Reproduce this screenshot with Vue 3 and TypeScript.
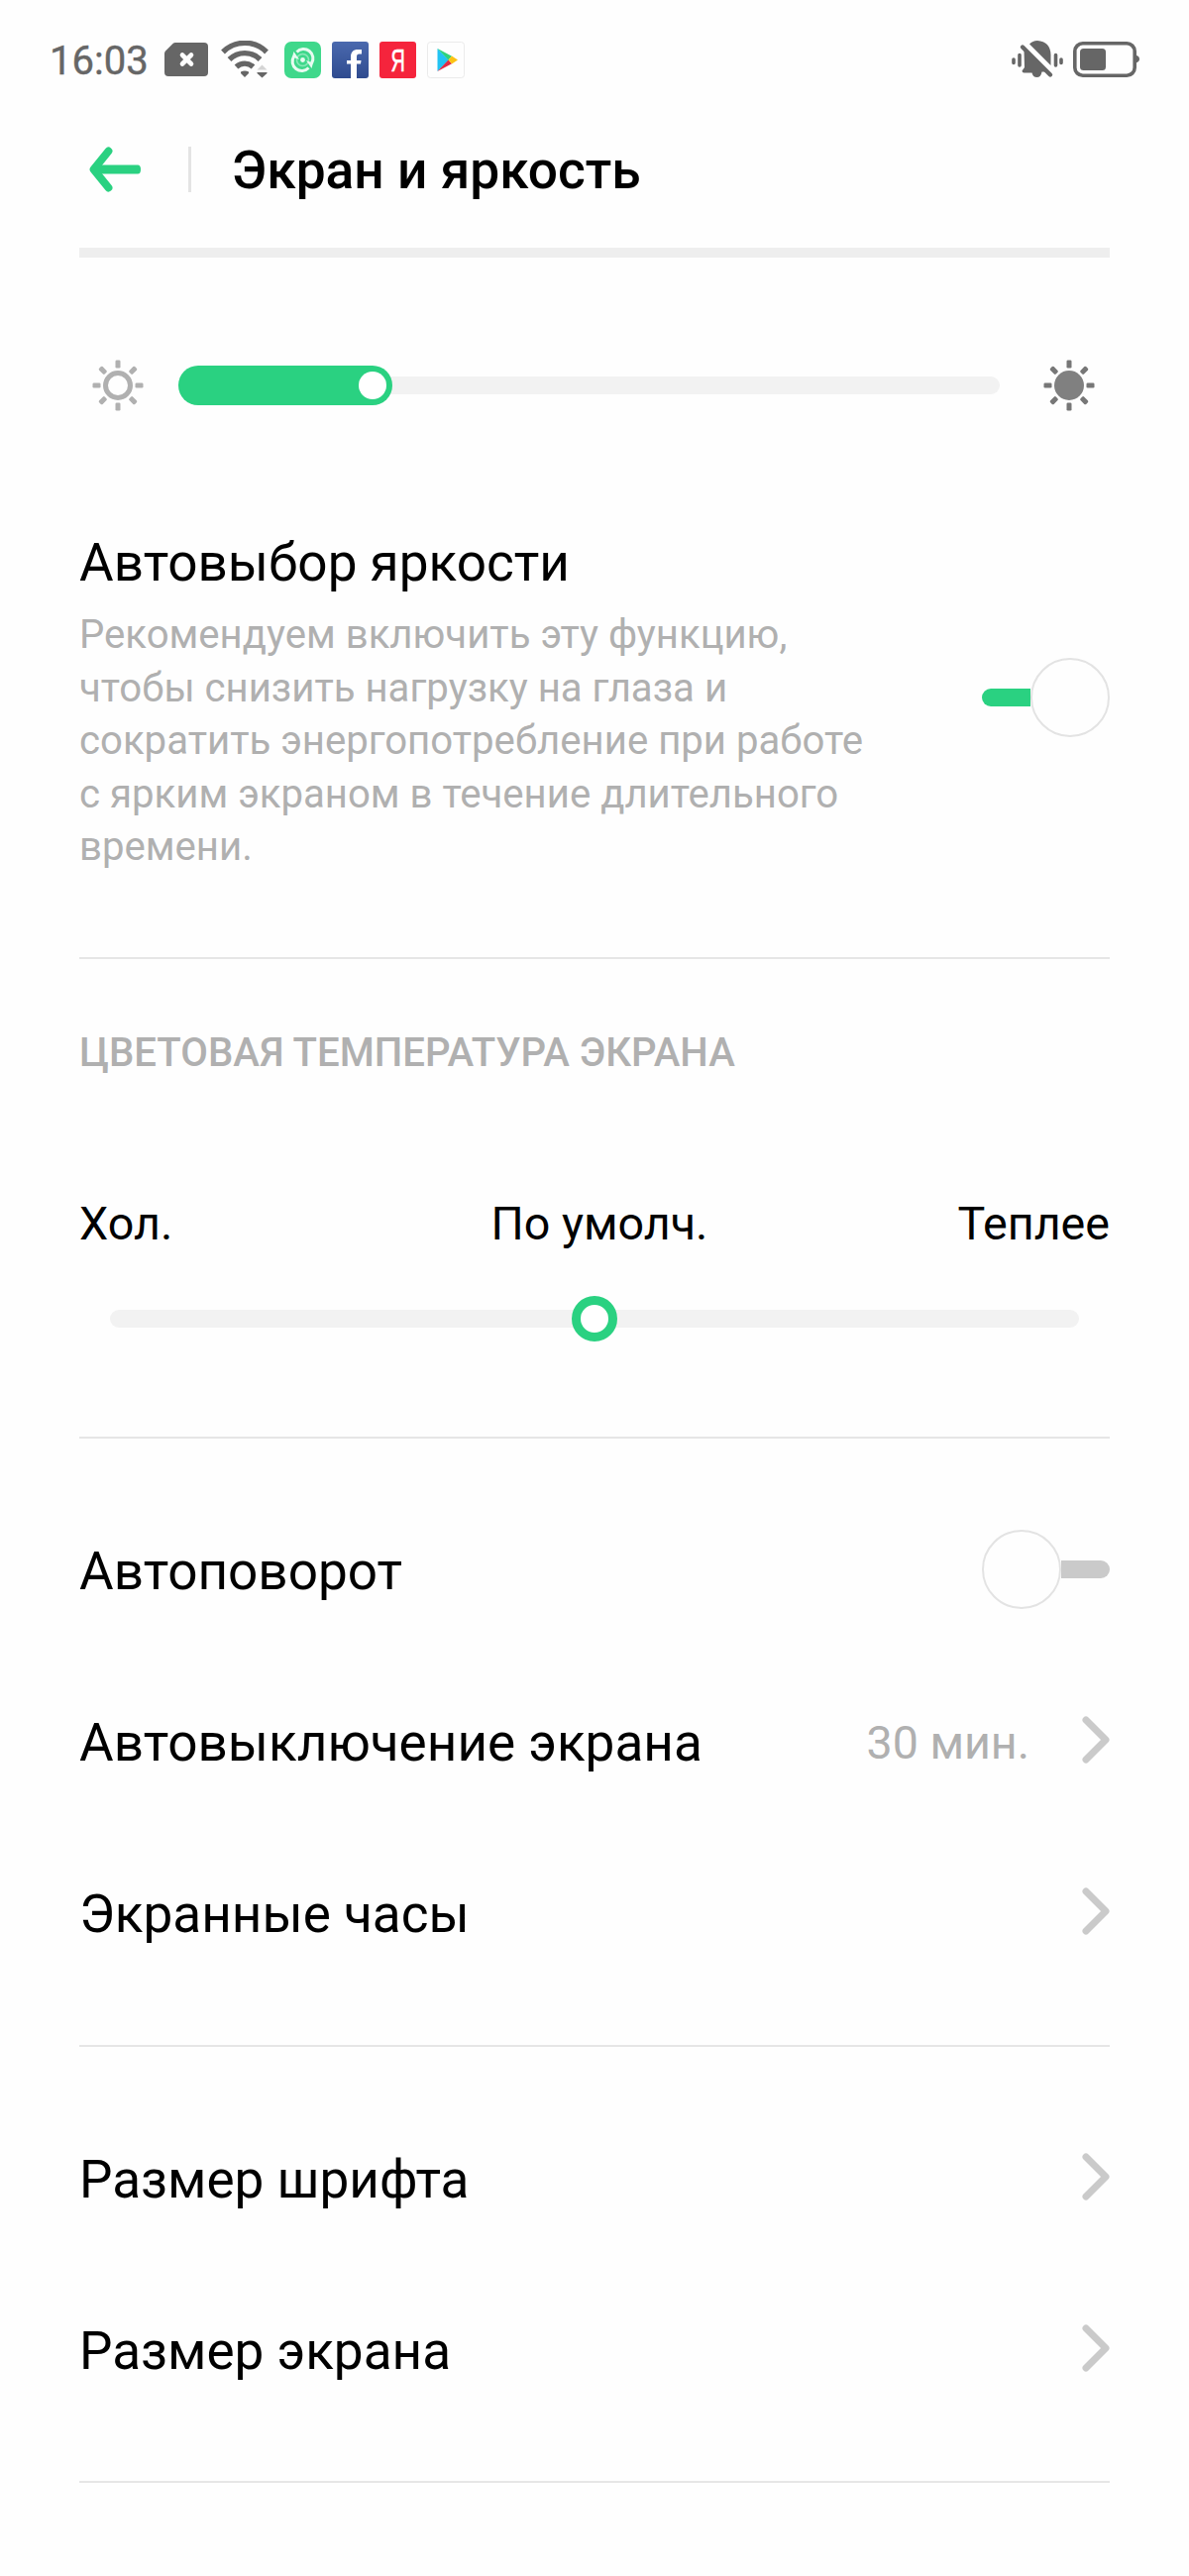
<script setup lang="ts">
import { ref } from 'vue'

interface Row {
  label: string
  value?: string
  kind: 'toggle' | 'link'
}

const brightness = ref(26.1)
const autoBrightness = ref(true)
const autoRotate = ref(false)
const rays = [0, 45, 90, 135, 180, 225, 270, 315]

const groups: Row[][] = [
  [
    { label: 'Автоповорот', kind: 'toggle' },
    { label: 'Автовыключение экрана', value: '30 мин.', kind: 'link' },
    { label: 'Экранные часы', kind: 'link' },
  ],
  [
    { label: 'Размер шрифта', kind: 'link' },
    { label: 'Размер экрана', kind: 'link' },
  ],
]
</script>

<template>
  <main class="screen">
    <div class="status">
      <span class="clock">16:03</span>
      <svg class="sim" width="44" height="34" viewBox="0 0 44 34">
        <path d="M11 0H40Q44 0 44 4V30Q44 34 40 34H4Q0 34 0 30V11Q0 9.500 1 8.500L8.500 1Q9.500 0 11 0Z" fill="#666" />
        <path d="M18 12.500L27 21.500M27 12.500L18 21.500" stroke="#fefefe" stroke-width="4.600" stroke-linecap="round" />
      </svg>
      <svg class="wifi" width="48" height="38" viewBox="0 0 48 38">
        <g fill="none" stroke="#666" stroke-width="5.400">
          <path d="M2 11.500A31 31 0 0 1 46 11.500" />
          <path d="M8.500 19A22 22 0 0 1 39.500 19" />
          <path d="M15.500 26.500A12.500 12.500 0 0 1 32.500 26.500" />
        </g>
        <path d="M20 31.500Q24 29.500 28 31.500V33L24 37L20 33Z" fill="#666" />
        <path d="M36.500 29.500L41.500 24.500L46.500 29.500Z" fill="#d4d4d4" />
        <path d="M36.500 32H46.500V33L41.500 37.500L36.500 33Z" fill="#666" />
      </svg>
      <svg class="app-sync" width="37" height="37" viewBox="0 0 37 37">
        <rect width="37" height="37" rx="7" fill="#3fd88b" />
        <g fill="none" stroke="#e8fbf1" stroke-width="3">
          <path d="M12.500 10.500A9.500 9.500 0 0 1 27.500 22" />
          <path d="M24.500 26.500A9.500 9.500 0 0 1 9.500 15" />
          <circle cx="18.500" cy="18.500" r="6" stroke="#8ce8ba" stroke-width="1.600" />
        </g>
        <path d="M22 19L29 21.500L27.500 27Z M15 18L8 15.500L9.500 10Z" fill="#e8fbf1" />
        <circle cx="18.500" cy="18.500" r="2.400" fill="#e8fbf1" />
      </svg>
      <svg class="app" width="37" height="37" viewBox="0 0 37 37">
        <defs>
          <linearGradient id="fb" x1="0" y1="0" x2="0" y2="1">
            <stop offset="0" stop-color="#4a69ae" />
            <stop offset="1" stop-color="#2f4b8f" />
          </linearGradient>
        </defs>
        <rect width="37" height="37" rx="3" fill="url(#fb)" />
        <path d="M19 37V22.500H15V19H19V15.500C19 10.500 21.500 8 26 8H30V12.500H27.500C25.500 12.500 25 13.500 25 15.500V19H29.500L29 22.500H25V37Z" fill="#fff" />
      </svg>
      <span class="ya"><span>Я</span></span>
      <svg class="app" width="38" height="37" viewBox="0 0 38 37">
        <rect x="0.500" y="0.500" width="37" height="36" rx="3" fill="#fefefe" stroke="#ebebeb" />
        <path d="M10.500 7V30L22 18.500Z" fill="#22c3f3" />
        <path d="M10.500 7L25 14.700L21.500 18.500Z" fill="#2fd37b" />
        <path d="M10.500 30L25 22.300L21.500 18.500Z" fill="#e32b45" />
        <path d="M25 14.500L31 18.500L25 22.500L21.500 18.500Z" fill="#fcc213" />
      </svg>
      <svg class="bell" width="52" height="40" viewBox="0 0 52 40">
        <path d="M18 4.500Q21 1 26 1Q39 2 39.500 15V26Z" fill="#666" />
        <path d="M12.500 10.500L35 32.500H30.500Q29.500 38 25.500 38Q21.500 38 20.500 33.500H12.500Q10.500 33.500 10.500 31.500L13 28Z" fill="#666" />
        <path d="M11 7.500L39 35.500" stroke="#666" stroke-width="4.400" stroke-linecap="round" />
        <g stroke="#666" stroke-width="3.600" stroke-linecap="round">
          <path d="M2 20V23.500M8 15.500V26M44.500 15.500V26M50 20V23.500" />
        </g>
      </svg>
      <svg class="battery" width="68" height="36" viewBox="0 0 68 36">
        <rect x="1.800" y="1.800" width="60.400" height="32.400" rx="8" fill="none" stroke="#666" stroke-width="3.600" />
        <rect x="7" y="7" width="26" height="22" rx="3.500" fill="#666" />
        <path d="M63 13.500Q67 14.500 67 17.500Q67 20.500 63 21.500Z" fill="#666" />
      </svg>
    </div>

    <header class="bar">
      <svg width="54" height="46" viewBox="0 0 54 46">
        <path d="M20.500 4.500L5.500 23L20.500 41.500" fill="none" stroke="#2ad181" stroke-width="7.800" stroke-linecap="round" stroke-linejoin="round" />
        <path d="M7 18.500H50Q53 18.500 53 23T50 27.500H7Z" fill="#2ad181" />
      </svg>
      <i class="sep"></i>
      <h1>Экран и яркость</h1>
    </header>
    <div class="edge"></div>

    <section class="brightness">
      <svg width="52" height="52" viewBox="-26 -26 52 52">
        <circle r="12.500" fill="none" stroke="#b0b0b0" stroke-width="5" />
        <rect v-for="a in rays" :key="a" x="-2.500" y="-25.500" width="5" height="8" rx="1.300" fill="#b0b0b0" :transform="`rotate(${a})`" />
      </svg>
      <div class="track">
        <div class="fill" :style="{ width: brightness + '%' }"><i class="dot"></i></div>
      </div>
      <svg width="52" height="52" viewBox="-26 -26 52 52">
        <circle r="15" fill="#808080" />
        <rect v-for="a in rays" :key="a" x="-2.500" y="-25.500" width="5" height="8" rx="1.300" fill="#777" :transform="`rotate(${a})`" />
      </svg>
    </section>

    <section class="auto">
      <div class="auto-text">
        <h2>Автовыбор яркости</h2>
        <p>Рекомендуем включить эту функцию,<br />чтобы снизить нагрузку на глаза и<br />сократить энергопотребление при работе<br />с ярким экраном в течение длительного<br />времени.</p>
      </div>
      <div class="toggle" :class="{ on: autoBrightness }" @click="autoBrightness = !autoBrightness"><i></i><b></b></div>
    </section>

    <section class="temperature">
      <h3>ЦВЕТОВАЯ ТЕМПЕРАТУРА ЭКРАНА</h3>
      <div class="labels"><span>Хол.</span><span class="mid">По умолч.</span><span class="warm">Теплее</span></div>
      <div class="temp-track"><i></i></div>
    </section>

    <section v-for="(rows, g) in groups" :key="g" class="group">
      <div v-for="row in rows" :key="row.label" class="row">
        <span class="name">{{ row.label }}</span>
        <span v-if="row.value" class="value">{{ row.value }}</span>
        <div v-if="row.kind === 'toggle'" class="toggle" :class="{ on: autoRotate }" @click="autoRotate = !autoRotate"><i></i><b></b></div>
        <svg v-else class="chevron" width="28" height="48" viewBox="0 0 28 48">
          <path d="M4 4L24 24L4 44" fill="none" stroke="#cacaca" stroke-width="7" stroke-linecap="round" stroke-linejoin="round" />
        </svg>
      </div>
    </section>
  </main>
</template>

<style>
body {
  background: #fefefe;
}
</style>

<style scoped>
.screen {
  box-sizing: border-box;
  width: 1200px;
  height: 2600px;
  overflow: hidden;
  background: #fefefe;
  color: #000;
  font-family: Roboto, "Liberation Sans", sans-serif;
}
svg {
  display: block;
  flex: none;
}
h1, h2, h3, p {
  margin: 0;
  font-weight: 400;
}
.status {
  display: flex;
  align-items: center;
  box-sizing: border-box;
  height: 120px;
  padding: 0 49px 0 50px;
}
.clock {
  width: 116px;
  font-size: 40px;
  line-height: 48px;
  color: #666;
  margin-top: 4px;
  white-space: nowrap;
  -webkit-text-stroke: 0.400px #666;
}
.wifi { margin-left: 13px; }
.app-sync { margin-left: 16px; }
.app, .ya { margin-left: 11px; }
.ya {
  width: 37px;
  height: 37px;
  border-radius: 3px;
  background: #f5243c;
  color: #fff;
  font-family: "Liberation Sans", sans-serif;
  font-size: 32px;
  line-height: 38px;
  text-align: center;
}
.ya span {
  display: inline-block;
  transform: scaleX(0.620);
  -webkit-text-stroke: 0.600px #fff;
}
.bell { margin-left: auto; }
.battery { margin-left: 10px; }
.bar {
  display: flex;
  align-items: center;
  height: 102px;
  padding-left: 89px;
}
.sep {
  width: 3px;
  height: 46px;
  margin-left: 47px;
  background: #e4e4e4;
}
h1 {
  margin-top: 2px;
  margin-left: 41px;
  font-size: 53.300px;
  line-height: 60px;
  font-weight: 500;
}
.edge {
  height: 10px;
  margin: 28px 80px 0;
  background: #eee;
}
.brightness {
  display: flex;
  align-items: center;
  height: 257px;
  padding: 0 95px 0 93px;
}
.track {
  display: flex;
  align-items: center;
  width: 829px;
  height: 18px;
  margin: 0 44px 0 35px;
  border-radius: 9px;
  background: #f2f2f2;
}
.fill {
  display: flex;
  align-items: center;
  justify-content: flex-end;
  box-sizing: border-box;
  height: 40px;
  padding-right: 6px;
  border-radius: 20px;
  background: #2ad181;
}
.dot {
  width: 28px;
  height: 28px;
  border-radius: 50%;
  background: #fff;
}
.auto {
  display: flex;
  justify-content: space-between;
  align-items: flex-start;
  height: 428px;
  margin: 0 80px;
  padding-top: 21px;
  border-bottom: 2px solid #e6e6e6;
}
h2, .name {
  font-size: 53.100px;
  line-height: 60px;
  white-space: nowrap;
}
p {
  margin-top: 16px;
  font-size: 40.150px;
  line-height: 53.600px;
  color: #b0b0b0;
  white-space: nowrap;
}
.auto .toggle { margin-top: 126px; }
.toggle {
  display: flex;
  align-items: center;
  width: 129px;
  height: 80px;
}
.toggle i {
  flex: 1;
  order: 2;
  height: 18px;
  border-radius: 0 9px 9px 0;
  background: #cacaca;
}
.toggle b {
  box-sizing: border-box;
  order: 1;
  width: 80px;
  height: 80px;
  border: 2px solid #e3e3e3;
  border-radius: 50%;
  background: #fefefe;
}
.toggle.on i {
  order: 0;
  border-radius: 9px 0 0 9px;
  background: #2ad181;
}
.temperature {
  height: 482px;
  margin: 0 80px;
  border-bottom: 2px solid #e6e6e6;
}
h3 {
  padding-top: 71px;
  font-size: 40.150px;
  line-height: 48px;
  font-weight: 500;
  color: #b0b0b0;
}
.labels {
  display: flex;
  margin-top: 120px;
  font-size: 46.600px;
  line-height: 56px;
}
.labels span { flex: 1; }
.mid {
  padding-left: 10px;
  text-align: center;
}
.warm { text-align: right; }
.temp-track {
  display: flex;
  align-items: center;
  justify-content: center;
  height: 18px;
  margin: 59px 31px 0;
  border-radius: 9px;
  background: #f2f2f2;
}
.temp-track i {
  width: 28px;
  height: 28px;
  border: 9px solid #2ad181;
  border-radius: 50%;
  background: #fff;
}
.group {
  margin: 0 80px;
  padding: 47px 0 46px;
  border-bottom: 2px solid #e6e6e6;
}
.group:last-child { padding-bottom: 45px; }
.row {
  display: flex;
  align-items: center;
  height: 173px;
}
.name { flex: 1; }
.value {
  margin-right: 53px;
  font-size: 46.600px;
  line-height: 56px;
  color: #b0b0b0;
}
.row .toggle { margin-bottom: 3px; }
.chevron { margin-bottom: 5px; }
</style>
